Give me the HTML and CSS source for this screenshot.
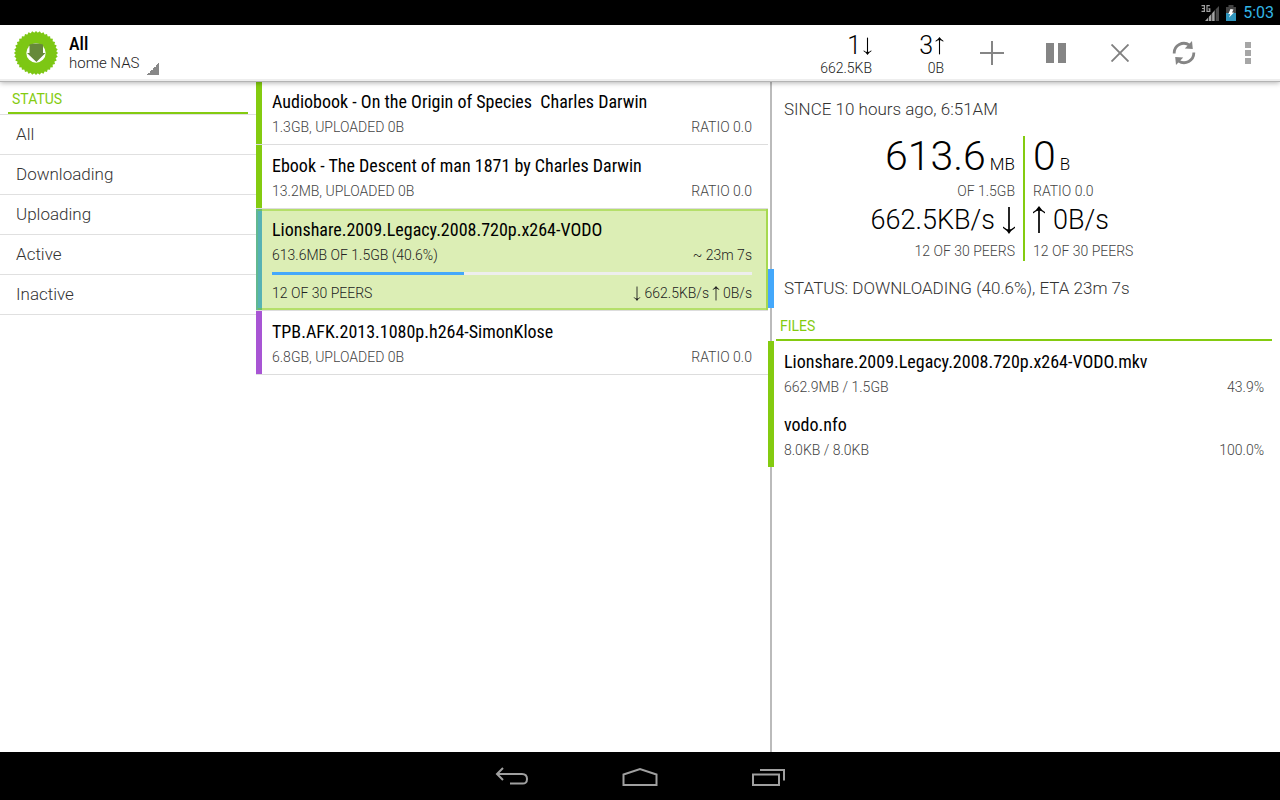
FILE: index.html
```html
<!DOCTYPE html>
<html lang="en">
<head>
<meta charset="utf-8">
<title>All - home NAS</title>
<link rel="stylesheet" href="styles.css">
</head>
<body>
<svg width="0" height="0" class="defs" aria-hidden="true">
  <defs>
    <symbol id="down" viewBox="0 0 12 28"><path d="M6 1V26" fill="none" stroke="currentColor" stroke-width="1.7"/><path d="M0 20.5Q3.5 23.5 6 23.5T12 20.5V22Q8.500 24 6 28Q3.500 24 0 22Z" fill="currentColor"/></symbol>
    <symbol id="up" viewBox="0 0 12 28"><path d="M6 2V27" fill="none" stroke="currentColor" stroke-width="1.7"/><path d="M0 7.500Q3.500 4.500 6 4.500T12 7.500V6Q8.500 4 6 0Q3.500 4 0 6Z" fill="currentColor"/></symbol>
  </defs>
</svg>

<div class="statusbar">
  <svg width="18" height="18" viewBox="0 0 18 18" aria-label="3G signal">
    <g fill="none" stroke="#a0a0a0" stroke-width="1.200"><path d="M.5 1.600H3.400V7.400H.5M1 4.500H3.400M8.800 1.600H6V7.400H8.800V4.800H7.400"/></g>
    <path d="M4 17L14 6V17Z" fill="#a6a6a6"/><path d="M14.500 5.500L18 2V17H14.500Z" fill="#4a4a4a"/>
    <path d="M7.500 10V17M10.700 8V17M14 5V17" stroke="#000" stroke-width=".7"/>
  </svg>
  <svg class="battery" width="10" height="16" viewBox="0 0 10 16" aria-label="Battery charging">
    <path d="M2.500 0H7.500V2H10V16H0V2H2.500Z" fill="#444"/><path d="M0 8H10V16H0Z" fill="#3095bd"/>
    <path d="M4.500 4L7.500 4.500 6 7.500H8L3 12.500 4.300 9H2.300Z" fill="#fff"/>
  </svg>
  <span>5:03</span>
</div>

<header class="appbar">
  <svg class="logo" width="44" height="44" viewBox="-22 -22 44 44" aria-hidden="true">
    <defs><path id="sq" d="M0-22L22 0 0 22-22 0Z"/></defs>
    <g fill="#7dc714">
      <use href="#sq"/><use href="#sq" transform="rotate(10)"/><use href="#sq" transform="rotate(20)"/><use href="#sq" transform="rotate(30)"/><use href="#sq" transform="rotate(40)"/><use href="#sq" transform="rotate(50)"/><use href="#sq" transform="rotate(60)"/><use href="#sq" transform="rotate(70)"/><use href="#sq" transform="rotate(80)"/>
    </g>
    <circle r="9.700" fill="#fff"/>
    <path d="M-6.500-8.500Q0-10.500 7-8.500V0H9.500L.4 9 -9 0H-6.500Z" fill="#66893a"/>
  </svg>
  <button class="spinner" type="button">
    <span class="spinner-title">All</span>
    <span class="spinner-sub">home NAS</span>
  </button>
  <div class="counter">
    <div class="counter-main">1<svg width="9" height="18" aria-label="down"><use href="#down"/></svg></div>
    <div class="counter-sub">662.5KB</div>
  </div>
  <div class="counter">
    <div class="counter-main">3<svg width="9" height="18" aria-label="up"><use href="#up"/></svg></div>
    <div class="counter-sub">0B</div>
  </div>
  <button class="action" type="button" aria-label="Add"><svg width="24" height="24"><path d="M12 0V24M0 12H24" stroke="#858585" stroke-width="2"/></svg></button>
  <button class="action" type="button" aria-label="Pause"><svg width="20" height="20"><path d="M0 0H8V20H0ZM12 0H20V20H12Z" fill="#858585"/></svg></button>
  <button class="action" type="button" aria-label="Remove"><svg width="18" height="18"><path d="M.5 .5L17.500 17.500M17.500 .5L.5 17.500" stroke="#808080" stroke-width="1.900"/></svg></button>
  <button class="action" type="button" aria-label="Refresh"><svg width="24" height="24" viewBox="0 0 24 24"><path d="M2.200 12.500A9.700 9.700 0 0 1 17.500 4.200M21.800 11.500A9.700 9.700 0 0 1 6.500 19.800" fill="none" stroke="#858585" stroke-width="2.800"/><path d="M20 0L20.800 8 12.800 7.500ZM4 24L3.200 16 11.200 16.500Z" fill="#858585"/></svg></button>
  <button class="action" type="button" aria-label="More options"><svg width="6" height="22"><path d="M0 0H6V6H0ZM0 8H6V14H0ZM0 16H6V22H0Z" fill="#a6a6a6"/></svg></button>
</header>

<main class="panes">
  <nav class="filters">
    <h2 class="heading">STATUS</h2>
    <ul>
      <li><a href="#all">All</a></li>
      <li><a href="#downloading">Downloading</a></li>
      <li><a href="#uploading">Uploading</a></li>
      <li><a href="#active">Active</a></li>
      <li><a href="#inactive">Inactive</a></li>
    </ul>
  </nav>

  <section class="torrents">
    <article class="torrent seeding">
      <h3 class="name">Audiobook - On the Origin of Species&nbsp; Charles Darwin</h3>
      <p class="meta"><span>1.3GB, UPLOADED 0B</span><span>RATIO 0.0</span></p>
    </article>
    <article class="torrent seeding">
      <h3 class="name">Ebook - The Descent of man 1871 by Charles Darwin</h3>
      <p class="meta"><span>13.2MB, UPLOADED 0B</span><span>RATIO 0.0</span></p>
    </article>
    <article class="torrent loading selected">
      <h3 class="name">Lionshare.2009.Legacy.2008.720p.x264-VODO</h3>
      <p class="meta"><span>613.6MB OF 1.5GB (40.6%)</span><span>~ 23m 7s</span></p>
      <div class="progress"><div class="progress-fill" style="width:40%"></div></div>
      <p class="meta"><span>12 OF 30 PEERS</span><span class="rates"><svg width="8" height="15" aria-label="down"><use href="#down"/></svg>662.5KB/s<svg width="8" height="15" aria-label="up"><use href="#up"/></svg>0B/s</span></p>
    </article>
    <article class="torrent queued">
      <h3 class="name">TPB.AFK.2013.1080p.h264-SimonKlose</h3>
      <p class="meta"><span>6.8GB, UPLOADED 0B</span><span>RATIO 0.0</span></p>
    </article>
  </section>

  <section class="details">
    <p class="since">SINCE 10 hours ago, 6:51AM</p>
    <div class="stats">
      <div class="stat stat-down">
        <div class="total">613.6<small>MB</small></div>
        <div class="note">OF 1.5GB</div>
        <div class="speed">662.5KB/s<svg width="12" height="28" aria-label="down"><use href="#down"/></svg></div>
        <div class="note">12 OF 30 PEERS</div>
      </div>
      <div class="divider"></div>
      <div class="stat stat-up">
        <div class="total">0<small>B</small></div>
        <div class="note">RATIO 0.0</div>
        <div class="speed"><svg width="12" height="28" aria-label="up"><use href="#up"/></svg>0B/s</div>
        <div class="note">12 OF 30 PEERS</div>
      </div>
    </div>
    <p class="state">STATUS: DOWNLOADING (40.6%), ETA 23m 7s</p>
    <h2 class="heading">FILES</h2>
    <div class="file">
      <h3 class="name">Lionshare.2009.Legacy.2008.720p.x264-VODO.mkv</h3>
      <p class="meta"><span>662.9MB / 1.5GB</span><span>43.9%</span></p>
    </div>
    <div class="file">
      <h3 class="name">vodo.nfo</h3>
      <p class="meta"><span>8.0KB / 8.0KB</span><span>100.0%</span></p>
    </div>
  </section>
</main>

<footer class="navbar">
  <button type="button" aria-label="Back"><svg width="34" height="20" viewBox="0 0 34 20"><path d="M2 7H27Q32 7 32 12T27 16.500H15M8 1L2 7 8 13" fill="none" stroke="#a0a0a0" stroke-width="2"/></svg></button>
  <button type="button" aria-label="Home"><svg width="36" height="20" viewBox="0 0 36 20"><path d="M1.500 18V7.500L18 2 34.500 7.500V18Z" fill="none" stroke="#a0a0a0" stroke-width="2"/></svg></button>
  <button type="button" aria-label="Recent apps"><svg width="34" height="18" viewBox="0 0 34 18"><path d="M2 6.500H28V17H2ZM9 2H33V12.500" fill="none" stroke="#a0a0a0" stroke-width="2"/></svg></button>
</footer>
</body>
</html>
```
FILE: styles.css
```css
* {
  box-sizing: border-box;
}

body {
  margin: 0;
  min-height: 100vh;
  display: flex;
  flex-direction: column;
  background: #fff;
  color: #000;
  font-family: Roboto, "Liberation Sans", sans-serif;
  font-weight: 300;
}

h2, h3, p, ul {
  margin: 0;
  padding: 0;
}

ul {
  list-style: none;
}

button {
  border: 0;
  padding: 0;
  background: none;
  color: inherit;
  font: inherit;
}

.defs {
  position: absolute;
}

.statusbar {
  display: flex;
  justify-content: flex-end;
  align-items: center;
  height: 25px;
  padding-right: 6px;
  background: #000;
  color: #33b5e5;
  font-size: 16px;
  font-weight: 400;
}

.battery {
  margin: 0 7px;
}

.appbar {
  display: flex;
  align-items: center;
  height: 56px;
  padding: 2px 0 0 14px;
  border-bottom: 2px solid #eee;
  box-shadow: 0 1px 0 #b4b4b4, 0 2px 5px rgba(0, 0, 0, 0.3);
  background: #fff;
  position: relative;
  z-index: 1;
}

.spinner {
  display: flex;
  flex-direction: column;
  margin: 0 auto 0 7px;
  padding: 3px 24px 0 4px;
  text-align: left;
  background: linear-gradient(135deg, transparent 50%, #888 50%) right 4px bottom 0 / 12px 12px no-repeat;
}

.spinner-title {
  font: 500 18px/20px "Roboto Condensed", Roboto, sans-serif;
}

.spinner-sub {
  color: #222;
  font-size: 15px;
  line-height: 19px;
  padding-bottom: 2px;
}

.counter {
  width: 72px;
  padding: 4px 16px 0 0;
  text-align: right;
}

.counter-main {
  display: flex;
  justify-content: flex-end;
  align-items: center;
  gap: 2px;
  font-size: 25px;
  line-height: 26px;
}

.counter-sub {
  color: #222;
  font-size: 14px;
  line-height: 18px;
}

.action {
  display: flex;
  justify-content: center;
  align-items: center;
  width: 64px;
  height: 52px;
}

.panes {
  flex: 1;
  display: grid;
  grid-template-columns: 1fr 2fr 2fr;
}

.heading {
  margin: 0 8px;
  padding: 5px 4px 0;
  border-bottom: 2px solid #84cb10;
  color: #84cb10;
  font-size: 14px;
  font-weight: 400;
  line-height: 26px;
}

.filters li {
  border-bottom: 1px solid #e0e0e0;
}

.filters li:first-child {
  border-top: 1px solid #e0e0e0;
}

.filters a {
  display: block;
  padding-left: 16px;
  color: #333;
  font-size: 17px;
  line-height: 39px;
  text-decoration: none;
}

.torrent {
  padding: 9px 16px 8px 10px;
  border-left: 6px solid #84cb10;
  position: relative;
}

.torrent::after {
  content: "";
  display: block;
  position: absolute;
  inset: auto 0 -1px -6px;
  height: 1px;
  background: #ddd;
}

.torrents {
  display: flex;
  flex-direction: column;
  gap: 1px;
}

.loading {
  border-left-color: #44a8fb;
}

.queued {
  border-left-color: #a855d4;
}

.selected {
  background: #dceeb5;
}

.selected::before {
  content: "";
  position: absolute;
  inset: 0 0 0 -6px;
  border: 2px solid rgba(132, 203, 16, 0.45);
  background: linear-gradient(90deg, rgba(132, 203, 16, 0.3) 4px, transparent 4px);
}

.name {
  font: 400 18px/24px "Roboto Condensed", Roboto, sans-serif;
}

.meta {
  display: flex;
  justify-content: space-between;
  margin-top: 4px;
  color: #444;
  font-size: 14px;
  line-height: 18px;
}

.selected .meta {
  color: #222;
}

.progress {
  height: 3px;
  margin: 8px 0 9px;
  background: #eee;
}

.progress-fill {
  height: 100%;
  background: #44a8fb;
}

.rates {
  display: flex;
  align-items: center;
  gap: 3px;
}

.details {
  background: linear-gradient(90deg, transparent 2px, #bbb 2px 4px, transparent 4px);
}

.since {
  padding: 16px 16px 15px;
  color: #333;
  font-size: 17px;
  line-height: 24px;
}

.stats {
  display: grid;
  grid-template-columns: 1fr 2px 1fr;
}

.divider {
  background: #84cb10;
}

.stat {
  display: flex;
  flex-direction: column;
  padding: 0 8px 1px;
}

.stat-down {
  align-items: flex-end;
}

.total {
  display: flex;
  align-items: baseline;
  gap: 4px;
  font-size: 41px;
  line-height: 40px;
}

.total small {
  font-size: 17px;
  line-height: 20px;
}

.note {
  margin-top: 6px;
  color: #444;
  font-size: 14px;
  line-height: 18px;
}

.speed {
  display: flex;
  align-items: center;
  gap: 8px;
  margin-top: 4px;
  font-size: 27px;
  line-height: 32px;
}

.state {
  margin-top: 8px;
  padding-left: 10px;
  border-left: 6px solid #44a8fb;
  color: #333;
  font-size: 17px;
  line-height: 39px;
}

.file {
  padding: 9px 16px 8px 10px;
  border-left: 6px solid #84cb10;
}

.navbar {
  display: flex;
  justify-content: center;
  height: 48px;
  background: #000;
}

.navbar button {
  display: flex;
  justify-content: center;
  align-items: center;
  width: 128px;
  padding-top: 2px;
}
```
